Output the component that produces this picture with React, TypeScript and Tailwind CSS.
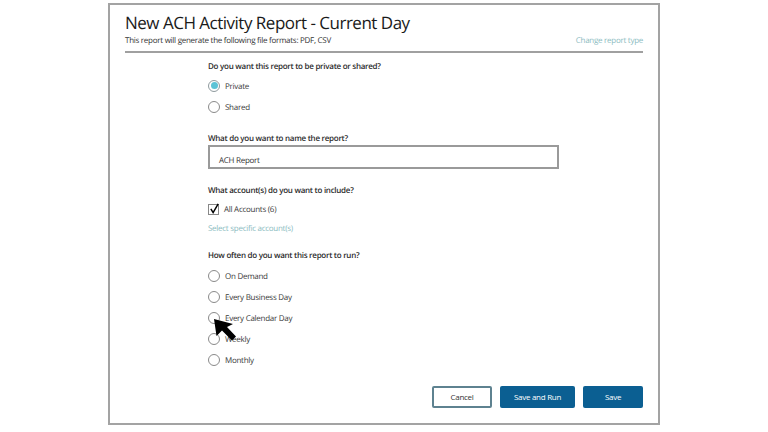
const Radio = (data: { label: string; checked?: boolean }) => {
    return (
        <div className="flex h-[21px] flex-row items-center">
            <span
                className={
                    data.checked
                        ? 'flex h-[10px] w-[10px] items-center justify-center rounded-full border border-[#8f9a9e] bg-white box-content'
                        : 'h-[10px] w-[10px] rounded-full border border-[#8a8a8a] bg-white box-content'
                }
            >
                {data.checked && <span className="h-[7px] w-[7px] rounded-full bg-[#5cc3d6]" />}
            </span>
            <span className="ml-[5px] mt-[3px] text-[8px] tracking-[-0.27px] text-[#3a3a3a]">{data.label}</span>
        </div>
    )
}

const Question = (data: { text: string }) => (
    <p className="pt-[2px] text-[8px] leading-[10px] font-semibold tracking-[-0.27px] text-[#2b2b2b]">{data.text}</p>
)

function Cursor() {
    return (
        <svg className="absolute left-[213px] top-[318px]" width="25" height="24" viewBox="0 0 25 24">
            <path d="M1 1 L3.5 18 L9 12.5 L19 22.5 L23 18.5 L14 9 L20 6 Z" fill="#000" />
        </svg>
    )
}

export default function App() {
    return (
        <div className="relative flex h-[432px] w-[768px] justify-center bg-white pt-[3px] font-['Open_Sans',sans-serif] [text-rendering:geometricPrecision]">
            <section className="flex h-[422px] w-[552px] flex-col border-2 border-[#a3a3a3] px-[15px]">
                <header className="flex h-[48px] flex-col border-b-2 border-[#a0a0a0]">
                    <h1 className="mt-[5px] text-[17px] leading-[25px] font-medium tracking-[-0.5px] text-[#1a1a1a]">
                        New ACH Activity Report - Current Day
                    </h1>
                    <div className="flex flex-row justify-between text-[8px] leading-[12px] tracking-[-0.27px]">
                        <p className="text-[#333]">This report will generate the following file formats: PDF, CSV</p>
                        <a className="text-[#8cbcbf]">Change report type</a>
                    </div>
                </header>

                <div className="ml-[83px] flex flex-col pt-[7px]">
                    <Question text="Do you want this report to be private or shared?" />
                    <div className="mt-[3px] flex flex-col">
                        <Radio label="Private" checked />
                        <Radio label="Shared" />
                    </div>

                    <div className="mt-[15px]">
                        <Question text="What do you want to name the report?" />
                    </div>
                    <div className="mt-[1px] flex h-[24px] w-[351px] items-center border-2 border-[#9a9a9a] pl-[9px] pt-[7px] text-[8px] tracking-[-0.27px] text-[#333]">
                        ACH Report
                    </div>

                    <div className="mt-[15px]">
                        <Question text="What account(s) do you want to include?" />
                    </div>
                    <div className="mt-[6px] flex h-[14px] flex-row items-center">
                        <span className="relative h-[9px] w-[9px] border border-[#888] box-content">
                            <svg className="absolute left-[0px] top-[-3px]" width="11" height="13" viewBox="0 0 12 14">
                                <path d="M2 7.5 L4.5 11.5 L10 2" fill="none" stroke="#000" strokeWidth="1.6" />
                            </svg>
                        </span>
                        <span className="ml-[5px] mt-[2px] text-[8px] tracking-[-0.27px] text-[#3a3a3a]">All Accounts (6)</span>
                    </div>
                    <a className="mt-[7px] text-[8px] leading-[12px] tracking-[-0.27px] text-[#8cbcbf]">Select specific account(s)</a>

                    <div className="mt-[14px]">
                        <Question text="How often do you want this report to run?" />
                    </div>
                    <div className="mt-[4px] flex flex-col">
                        <Radio label="On Demand" />
                        <Radio label="Every Business Day" />
                        <Radio label="Every Calendar Day" />
                        <Radio label="Weekly" />
                        <Radio label="Monthly" />
                    </div>
                </div>

                <div className="mt-[16px] flex flex-row justify-end gap-[8px] text-[8px] tracking-[-0.27px]">
                    <button className="h-[22px] w-[60px] rounded-[2px] border-2 border-[#5e8290] bg-white text-[#333]">
                        Cancel
                    </button>
                    <button className="h-[22px] w-[75px] rounded-[2px] bg-[#0b5f92] text-white">Save and Run</button>
                    <button className="h-[22px] w-[60px] rounded-[2px] bg-[#0b5f92] text-white">Save</button>
                </div>
            </section>
            <Cursor />
        </div>
    )
}
